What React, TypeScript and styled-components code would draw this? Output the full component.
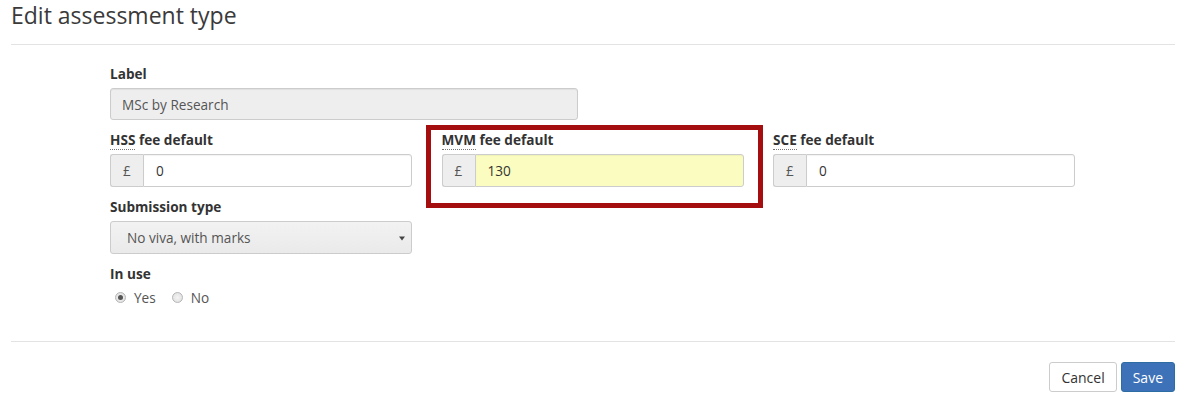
import React from "react";
import styled, { createGlobalStyle } from "styled-components";

const GlobalStyle = createGlobalStyle`
  body {
    margin: 0;
    background: #fff;
    font-family: "Open Sans", "Liberation Sans", Arial, sans-serif;
    font-size: 13.6px;
    color: #333;
  }
  * { box-sizing: border-box; }
`;

const Page = styled.div`
  padding: 0 25px 0 11px;
  width: 1200px;
`;

const Title = styled.h1`
  margin: 0;
  font-size: 23px;
  font-weight: 400;
  line-height: 31px;
  color: #3a3a3a;
`;

const Rule = styled.hr<{ $top: number; $bottom: number }>`
  border: 0;
  border-top: 1px solid #e3e3e3;
  margin: ${(p) => p.$top}px 0 ${(p) => p.$bottom}px;
  height: 0;
`;

const Body = styled.div`
  padding-left: 99px;
  display: flex;
  flex-direction: column;
  gap: 10px;
`;

const Grid = styled.div`
  display: grid;
  grid-template-columns: 302px 302px 302px;
  column-gap: 29.5px;
`;

const Group = styled.div<{ $width?: number }>`
  position: relative;
  width: ${(p) => (p.$width ? `${p.$width}px` : "auto")};
`;

const Label = styled.div`
  font-weight: 700;
  font-size: 13.6px;
  line-height: 19px;
  margin-bottom: 5px;
  color: #333;
`;

const Abbr = styled.span`
  border-bottom: 1px dotted #777;
`;

const Field = styled.div<{ $bg?: string }>`
  height: 32px;
  border: 1px solid #ccc;
  border-radius: 3px;
  background: ${(p) => p.$bg || "#fff"};
  display: flex;
  align-items: center;
  padding: 0 11px;
  color: #555;
  font-size: 13.6px;
  box-shadow: inset 0 1px 1px rgba(0, 0, 0, 0.06);
`;

const InputGroup = styled.div`
  display: flex;
  height: 33px;
`;

const Addon = styled.div`
  width: 33px;
  flex: none;
  border: 1px solid #ccc;
  border-right: 0;
  border-radius: 3px 0 0 3px;
  background: #eee;
  color: #555;
  display: flex;
  align-items: center;
  justify-content: center;
  font-size: 13.6px;
`;

const GroupInput = styled.div<{ $bg?: string }>`
  flex: 1;
  border: 1px solid #ccc;
  border-radius: 0 3px 3px 0;
  background: ${(p) => p.$bg || "#fff"};
  display: flex;
  align-items: center;
  padding: 0 12px;
  color: #333;
  font-size: 13.6px;
  box-shadow: inset 0 1px 1px rgba(0, 0, 0, 0.05);
`;

const Select = styled.div`
  height: 33px;
  border: 1px solid #ccc;
  border-radius: 3px;
  background: linear-gradient(#f2f2f2, #eaeaea);
  display: flex;
  align-items: center;
  justify-content: space-between;
  padding: 0 5px 0 16px;
  color: #555;
  font-size: 13.6px;
`;

const Highlight = styled.div`
  position: absolute;
  left: -16px;
  top: -5px;
  right: -19px;
  bottom: -21px;
  border: 5px solid #a50e0e;
  pointer-events: none;
`;

const Radios = styled.div`
  display: flex;
  align-items: center;
  height: 18px;
  padding-left: 5px;
  gap: 16px;
  color: #555;
  font-size: 13.6px;
`;

const RadioOption = styled.label`
  display: flex;
  align-items: center;
  gap: 8px;
`;

const RadioDot = styled.span<{ $checked?: boolean }>`
  width: 11px;
  height: 11px;
  border-radius: 50%;
  border: 1px solid #b5b5b5;
  background: radial-gradient(circle, #f4f4f4 0%, #dcdcdc 100%);
  display: inline-flex;
  align-items: center;
  justify-content: center;
  &::after {
    content: "";
    width: 5px;
    height: 5px;
    border-radius: 50%;
    background: ${(p) => (p.$checked ? "#555" : "transparent")};
  }
`;

const Footer = styled.div`
  display: flex;
  justify-content: flex-end;
  gap: 4px;
`;

const Button = styled.button<{ $primary?: boolean }>`
  height: 30px;
  padding: 0 11px;
  font-family: "Open Sans", "Liberation Sans", Arial, sans-serif;
  font-size: 14px;
  border-radius: 3px;
  border: 1px solid ${(p) => (p.$primary ? "#2e6da4" : "#ccc")};
  background: ${(p) => (p.$primary ? "#3d72b8" : "#fff")};
  color: ${(p) => (p.$primary ? "#fff" : "#333")};
  cursor: pointer;
`;

const Caret = () => (
  <svg width="8" height="6" viewBox="0 0 8 6">
    <path d="M1 1.5h6L4 5.5z" fill="#444" />
  </svg>
);

const FeeGroup = ({
  abbr,
  value,
  bg,
  highlighted,
}: {
  abbr: string;
  value: string;
  bg?: string;
  highlighted?: boolean;
}) => (
  <Group>
    <Label>
      <Abbr>{abbr}</Abbr> fee default
    </Label>
    <InputGroup>
      <Addon>£</Addon>
      <GroupInput $bg={bg}>{value}</GroupInput>
    </InputGroup>
    {highlighted && <Highlight />}
  </Group>
);

export default function App() {
  return (
    <>
      <GlobalStyle />
      <Page>
        <Title>Edit assessment type</Title>
        <Rule $top={13} $bottom={19} />
        <Body>
          <Group $width={468}>
            <Label>Label</Label>
            <Field $bg="#eee">MSc by Research</Field>
          </Group>
          <Grid>
            <FeeGroup abbr="HSS" value="0" />
            <FeeGroup abbr="MVM" value="130" bg="#fbfdc0" highlighted />
            <FeeGroup abbr="SCE" value="0" />
          </Grid>
          <Grid>
            <Group>
              <Label>Submission type</Label>
              <Select>
                <span>No viva, with marks</span>
                <Caret />
              </Select>
            </Group>
          </Grid>
          <Group>
            <Label>In use</Label>
            <Radios>
              <RadioOption>
                <RadioDot $checked />
                Yes
              </RadioOption>
              <RadioOption>
                <RadioDot />
                No
              </RadioOption>
            </Radios>
          </Group>
        </Body>
        <Rule $top={35} $bottom={20} />
        <Footer>
          <Button>Cancel</Button>
          <Button $primary>Save</Button>
        </Footer>
      </Page>
    </>
  );
}
